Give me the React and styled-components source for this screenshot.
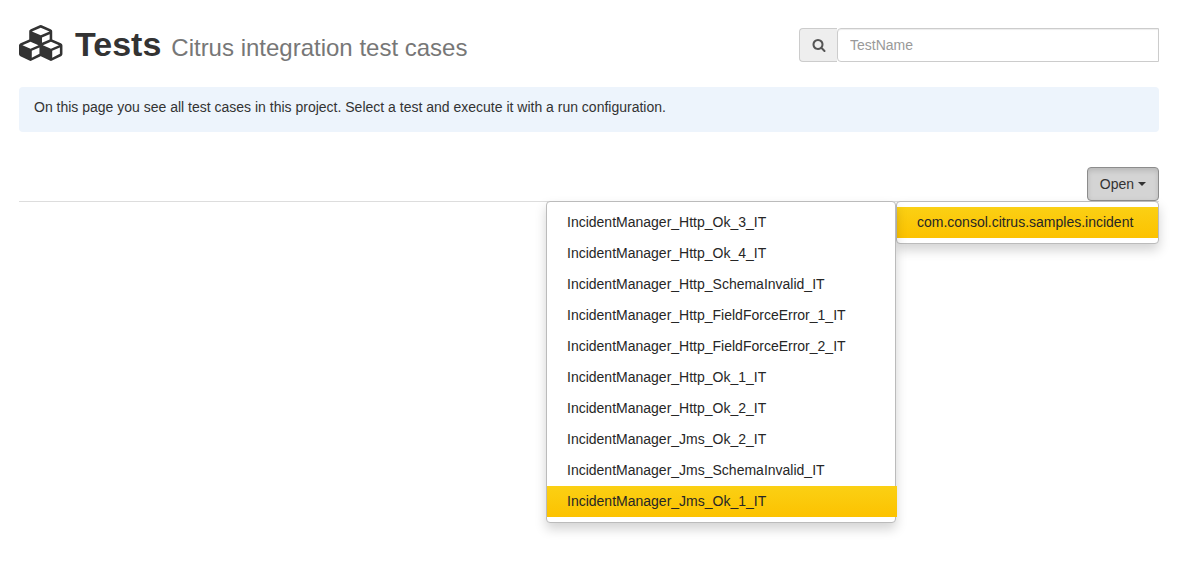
import React from "react";
import styled, { createGlobalStyle, css } from "styled-components";

const GlobalStyle = createGlobalStyle`
  *, *::before, *::after { box-sizing: border-box; }
  body {
    margin: 0;
    background: #fff;
    color: #333;
    font-family: "Helvetica Neue", "Liberation Sans", Helvetica, Arial, sans-serif;
    font-size: 14px;
    line-height: 20px;
  }
`;

const Page = styled.main`
  min-height: 100vh;
  padding: 24px 30px 0 19px;
`;

const Header = styled.header`
  display: flex;
  justify-content: space-between;
  align-items: flex-start;
  height: 63px;
`;

const Title = styled.h1`
  display: flex;
  align-items: baseline;
  margin: 0;
  font-size: 34px;
  line-height: 40px;
  font-weight: 700;
  white-space: nowrap;
`;

const CubesIcon = styled.svg`
  width: 46px;
  height: 36px;
  margin: 1px 10px 0 0;
  align-self: flex-start;
  fill: currentColor;
`;

const Subtitle = styled.small`
  margin-left: 10px;
  font-size: 24px;
  font-weight: 400;
  color: #777;
`;

const SearchGroup = styled.div`
  display: flex;
  width: 360px;
  height: 34px;
  margin-top: 4px;
`;

const SearchLabel = styled.label`
  display: flex;
  align-items: center;
  justify-content: center;
  width: 38px;
  border: 1px solid #ccc;
  border-right: 0;
  border-radius: 4px 0 0 4px;
  background: #eee;
  color: #555;
`;

const SearchIcon = styled.svg`
  width: 14px;
  height: 14px;
  fill: currentColor;
`;

const SearchInput = styled.input`
  flex: 1;
  min-width: 0;
  padding: 6px 12px;
  border: 1px solid #ccc;
  border-radius: 4px 0 0 4px;
  background: #fff;
  box-shadow: inset 0 1px 1px rgba(0, 0, 0, 0.075);
  color: #555;
  font: inherit;
  outline: none;
  &::placeholder { color: #999; opacity: 1; }
`;

const Notice = styled.p`
  margin: 0;
  padding: 10px 15px 15px;
  border-radius: 4px;
  background: #edf4fc;
`;

const TabBar = styled.nav`
  display: flex;
  justify-content: flex-end;
  margin-top: 35px;
  border-bottom: 1px solid #ddd;
`;

const Dropdown = styled.div`
  position: relative;
`;

const OpenButton = styled.button`
  display: flex;
  align-items: center;
  gap: 4px;
  height: 34px;
  padding: 0 12px;
  border: 1px solid #8c8c8c;
  border-radius: 4px;
  background: #d4d4d4;
  box-shadow: inset 0 3px 5px rgba(0, 0, 0, 0.125);
  color: #333;
  font: inherit;
  cursor: pointer;
`;

const Caret = styled.span`
  border-top: 4px solid currentColor;
  border-left: 4px solid transparent;
  border-right: 4px solid transparent;
`;

const Menu = styled.ul`
  position: absolute;
  top: 100%;
  right: 0;
  z-index: 1;
  margin: 0;
  padding: 5px 0;
  list-style: none;
  border: 1px solid #bbb;
  border-radius: 4px;
  background: #fff;
  box-shadow: 0 6px 12px rgba(0, 0, 0, 0.175);
  white-space: nowrap;
`;

const PackageMenu = styled(Menu)`
  width: 263px;
`;

const TestMenu = styled(Menu)`
  top: -6px;
  right: 100%;
  width: 350px;
  margin-right: 1px;
`;

const MenuItem = styled.li`
  position: relative;
`;

const MenuLink = styled.a`
  display: block;
  padding: 5px 20px 6px;
  color: #262626;
  text-decoration: none;
  ${(p) => p.$active && css`background: linear-gradient(#fbd014, #fcc200);`}
  ${(p) => p.$overhang && css`margin-right: -2px;`}
`;

const tests = [
  "IncidentManager_Http_Ok_3_IT",
  "IncidentManager_Http_Ok_4_IT",
  "IncidentManager_Http_SchemaInvalid_IT",
  "IncidentManager_Http_FieldForceError_1_IT",
  "IncidentManager_Http_FieldForceError_2_IT",
  "IncidentManager_Http_Ok_1_IT",
  "IncidentManager_Http_Ok_2_IT",
  "IncidentManager_Jms_Ok_2_IT",
  "IncidentManager_Jms_SchemaInvalid_IT",
  "IncidentManager_Jms_Ok_1_IT",
];
const selected = "IncidentManager_Jms_Ok_1_IT";

export default function App() {
  return (
    <>
      <GlobalStyle />
      <Page>
        <Header>
          <Title>
            <CubesIcon viewBox="0 0 2304 1792" aria-hidden="true">
              <path d="M640 1632l384-192v-314l-384 164v342zm-64-454l404-173-404-173-404 173zm1088 454l384-192v-314l-384 164v342zm-64-454l404-173-404-173-404 173zm-448-293l384-165v-266l-384 164v267zm-64-379l441-189-441-189-441 189zm1088 518v416q0 36-19 67t-52 47l-448 224q-25 14-57 14t-57-14l-448-224q-5-2-7-4-2 2-7 4l-448 224q-25 14-57 14t-57-14l-448-224q-33-16-52-47t-19-67v-416q0-38 21.500-70t56.500-48l434-186v-400q0-38 21.500-70t56.500-48l448-192q23-10 50-10t50 10l448 192q35 16 56.500 48t21.500 70v400l434 186q36 16 57 48t21 70z" />
            </CubesIcon>
            Tests
            <Subtitle>Citrus integration test cases</Subtitle>
          </Title>
          <SearchGroup>
            <SearchLabel htmlFor="test-name" aria-label="Test name">
              <SearchIcon viewBox="0 0 1792 1792" aria-hidden="true">
                <path d="M1216 832q0-185-131.500-316.500t-316.500-131.500-316.500 131.500-131.500 316.500 131.500 316.500 316.500 131.500 316.500-131.500 131.500-316.500zm512 832q0 52-38 90t-90 38q-54 0-90-38l-343-342q-179 124-399 124-143 0-273.500-55.500t-225-150-150-225-55.500-273.500 55.500-273.500 150-225 225-150 273.500-55.500 273.500 55.500 225 150 150 225 55.500 273.500q0 220-124 399l343 343q37 37 37 90z" />
              </SearchIcon>
            </SearchLabel>
            <SearchInput id="test-name" type="text" placeholder="TestName" />
          </SearchGroup>
        </Header>
        <Notice>
          On this page you see all test cases in this project. Select a test and execute it with a run configuration.
        </Notice>
        <TabBar>
          <Dropdown>
            <OpenButton type="button" aria-haspopup="true" aria-expanded="true">
              Open <Caret />
            </OpenButton>
            <PackageMenu>
              <MenuItem>
                <MenuLink href="#incident" $active>com.consol.citrus.samples.incident</MenuLink>
                <TestMenu>
                  {tests.map((name) => (
                    <MenuItem key={name}>
                      <MenuLink href={`#${name}`} $active={name === selected} $overhang={name === selected}>
                        {name}
                      </MenuLink>
                    </MenuItem>
                  ))}
                </TestMenu>
              </MenuItem>
            </PackageMenu>
          </Dropdown>
        </TabBar>
      </Page>
    </>
  );
}
